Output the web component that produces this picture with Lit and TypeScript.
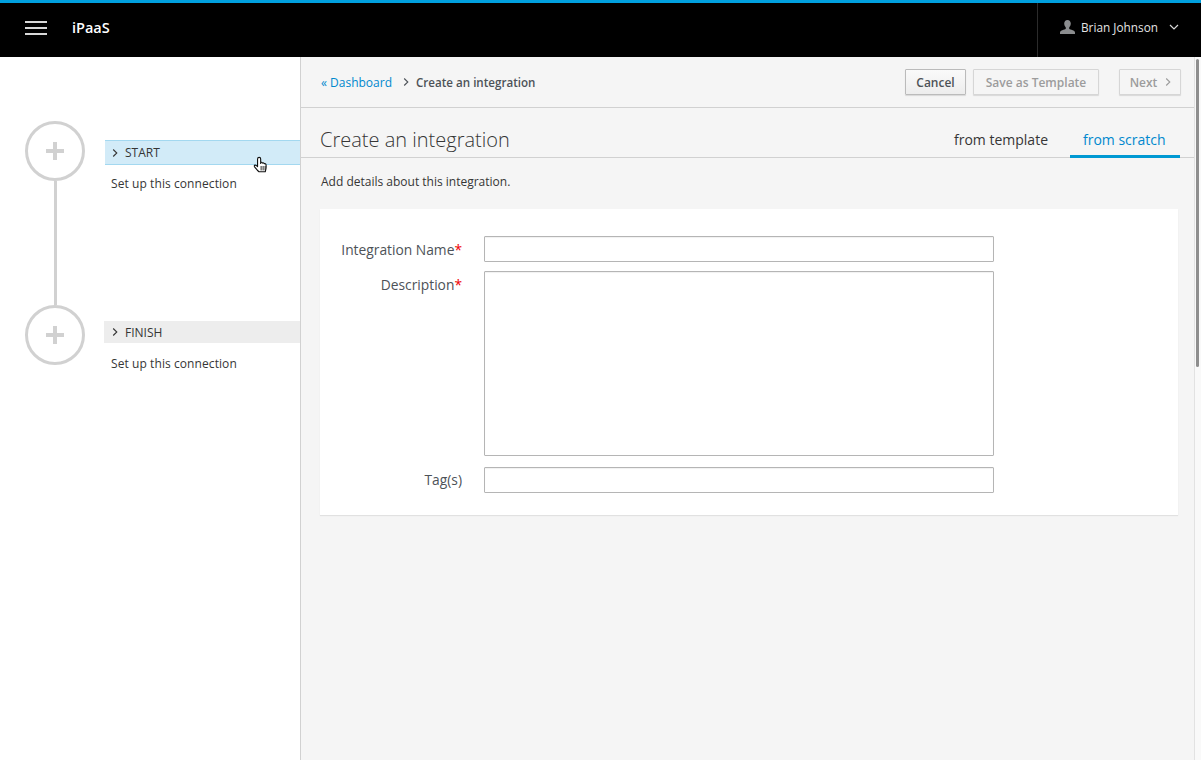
import { LitElement, html, css, svg } from 'lit';
import { customElement } from 'lit/decorators.js';

const chevron = (size: number, color: string) => html`
  <svg width=${size} height=${size} viewBox="0 0 10 10" fill="none" stroke=${color} stroke-width="1.1">
    <path d="M3.200 1.500 L6.800 5 L3.200 8.500"></path>
  </svg>
`;

const hand = svg`
  <path d="M5.500 1.200c.9 0 1.300.6 1.300 1.400v4.200l.3-1c.7-.3 1.300 0 1.400.6.700-.4 1.400-.1 1.500.6.700-.3 1.500 0 1.600.8.200 1.500.2 3-.2 4.400l-.5 2H5.300L3.800 12.800 1.300 9.700c-.5-.7-.2-1.400.5-1.500.7-.1 1.300.3 2.200 1.300V2.600c0-.8.600-1.400 1.500-1.400z" fill="#fff" stroke="#111" stroke-width="1" stroke-linejoin="round"></path>
  <path d="M7.200 9v4M9 9v4M10.800 9v4" stroke="#111" stroke-width=".8"></path>
`;

@customElement('app-root')
export class AppRoot extends LitElement {
  static styles = css`
    :host {
      display: block;
      height: 760px;
      overflow: hidden;
      font-family: 'Open Sans', 'Liberation Sans', sans-serif;
      font-size: 12px;
      color: #363636;
      background: #fff;
    }

    .topbar {
      display: flex;
      align-items: center;
      height: 54px;
      background: #000;
      border-top: 3px solid #00a0df;
      color: #fff;
    }

    .topbar__burger {
      display: flex;
      flex-direction: column;
      gap: 4px;
      width: 22px;
      margin: -4px 0 0 25px;
    }

    .topbar__burger span {
      height: 2px;
      background: #d8d8d8;
    }

    .topbar__brand {
      margin: -5px 0 0 25px;
      font-size: 14.500px;
      font-weight: 600;
    }

    .topbar__user {
      display: flex;
      align-items: center;
      align-self: stretch;
      margin-left: auto;
      width: 164px;
      box-sizing: border-box;
      padding: 0 0 7px 22px;
      border-left: 1px solid #2b2b2b;
      font-size: 11.800px;
      color: #e4e4e4;
    }

    .topbar__name {
      margin-left: 6px;
    }

    .topbar__caret {
      display: flex;
      margin-left: 10px;
    }

    .page {
      display: flex;
      height: 703px;
    }

    .side {
      flex: none;
      width: 300px;
      box-sizing: border-box;
      padding: 64px 0 0 25px;
    }

    .step {
      display: flex;
    }

    .step--first {
      height: 184px;
    }

    .rail {
      display: flex;
      flex-direction: column;
      align-items: center;
      flex: none;
      width: 60px;
    }

    .rail__circle {
      display: flex;
      align-items: center;
      justify-content: center;
      flex: none;
      box-sizing: border-box;
      width: 60px;
      height: 60px;
      border: 3px solid #d1d1d1;
      border-radius: 50%;
    }

    .rail__line {
      flex: 1;
      width: 3px;
      background: #d1d1d1;
    }

    .step__body {
      flex: 1;
      margin-left: 20px;
      padding-top: 19px;
    }

    .step__body--finish {
      margin-left: 19px;
      padding-top: 16px;
    }

    .step__head {
      display: flex;
      align-items: center;
      gap: 5px;
      height: 25px;
      box-sizing: border-box;
      padding-left: 5px;
      font-size: 12px;
      color: #363636;
    }

    .step__head--active {
      background: #d2ebf8;
      border-top: 1px solid #a3d8f0;
      border-bottom: 1px solid #a3d8f0;
    }

    .step__head--idle {
      height: 22px;
      padding-left: 6px;
      background: #ededed;
    }

    .step__note {
      margin: 10px 0 0 6px;
      font-size: 12px;
      line-height: 17px;
      letter-spacing: 0.08px;
      color: #363636;
    }

    .step__body--finish .step__note {
      margin: 12px 0 0 7px;
    }

    .cursor {
      position: absolute;
      left: 253px;
      top: 156px;
      width: 18px;
      height: 20px;
    }

    .main {
      flex: 1;
      position: relative;
      min-width: 0;
      background: #f5f5f5;
      border-left: 1px solid #d1d1d1;
    }

    .toolbar {
      display: flex;
      align-items: center;
      height: 51px;
      box-sizing: border-box;
      margin-right: 7px;
      padding: 0 13px 0 20px;
      border-bottom: 1px solid #d1d1d1;
    }

    .crumb {
      display: flex;
      align-items: center;
      font-size: 12px;
    }

    .crumb__link {
      color: #0088ce;
    }

    .crumb__sep {
      display: flex;
      margin: 0 5px 0 9px;
    }

    .crumb__current {
      font-size: 11.600px;
      font-weight: 600;
      color: #4d5258;
    }

    .actions {
      display: flex;
      margin-left: auto;
    }

    .btn {
      display: flex;
      align-items: center;
      justify-content: center;
      box-sizing: border-box;
      height: 26px;
      padding: 0;
      font: 600 12px 'Open Sans', 'Liberation Sans', sans-serif;
      border: 1px solid #bbb;
      border-radius: 1px;
      background: linear-gradient(#fafafa, #ededed);
      color: #4d5258;
      box-shadow: 0 1px 1px rgba(0, 0, 0, 0.12);
    }

    .btn--off {
      color: #9c9c9c;
      border-color: #d6d6d6;
      background: #f5f5f5;
    }

    .btn--cancel {
      width: 61px;
    }

    .btn--save {
      width: 126px;
      margin-left: 7px;
    }

    .btn--next {
      gap: 6px;
      width: 62px;
      margin-left: 20px;
      padding-left: 3px;
    }

    .heading {
      display: flex;
      align-items: flex-end;
      height: 50px;
      box-sizing: border-box;
      margin-right: 7px;
      padding-right: 14px;
      border-bottom: 1px solid #d1d1d1;
    }

    .heading__title {
      margin: 0 0 3px 19px;
      font-size: 20px;
      font-weight: 300;
      line-height: 28px;
      color: #363636;
    }

    .tabs {
      display: flex;
      margin-left: auto;
    }

    .tab {
      box-sizing: border-box;
      height: 34px;
      margin-bottom: -1px;
      padding: 6px 13px 0;
      font-size: 14px;
      line-height: 20px;
      color: #363636;
    }

    .tab--active {
      width: 110px;
      margin-left: 9px;
      color: #0088ce;
      border-bottom: 3px solid #0099d3;
    }

    .intro {
      margin: 16px 0 0 20px;
      font-size: 12px;
      line-height: 16px;
      color: #363636;
    }

    .card {
      display: grid;
      grid-template-columns: 142px 510px;
      column-gap: 22px;
      row-gap: 9px;
      box-sizing: border-box;
      width: 858px;
      height: 306px;
      margin: 19px 0 0 19px;
      padding: 27px 0 0 0;
      align-content: start;
      background: #fff;
      box-shadow: 0 1px 1px rgba(0, 0, 0, 0.08);
    }

    .card__label {
      box-sizing: border-box;
      height: 26px;
      padding-top: 1px;
      font-size: 13.800px;
      line-height: 26px;
      text-align: right;
      color: #4d5258;
    }

    .card__label--tags {
      margin-top: 1px;
    }

    .card__label em {
      font-style: normal;
      color: #e00;
    }

    .field {
      display: block;
      box-sizing: border-box;
      width: 510px;
      height: 26px;
      border: 1px solid #b5b5b5;
      border-radius: 1px;
      background: #fff;
      box-shadow: inset 0 1px 1px rgba(0, 0, 0, 0.06);
    }

    .field--area {
      height: 185px;
      resize: none;
    }

    .field--tags {
      margin-top: 2px;
    }

    .scrollbar {
      position: absolute;
      top: 0;
      right: 0;
      bottom: 0;
      width: 7px;
      box-sizing: border-box;
      padding: 2px 2px 0 1px;
      background: #f9f9f9;
      border-left: 1px solid #e2e2e2;
    }

    .scrollbar__thumb {
      height: 308px;
      border-radius: 2px;
      background: #8e8e8e;
    }
  `;

  render() {
    return html`
      <header class="topbar">
        <div class="topbar__burger"><span></span><span></span><span></span></div>
        <div class="topbar__brand">iPaaS</div>
        <div class="topbar__user">
          <svg width="15" height="14" viewBox="0 0 15 14" fill="#8b8d8f">
            <path d="M7.500 0c2 0 3.300 1.500 3.300 3.600 0 1.500-.7 3-1.600 3.800v1c0 .6 1 .9 2.300 1.400 1.700.6 3.500 1.200 3.500 2.700V14H0v-1.500c0-1.500 1.800-2.100 3.500-2.700 1.300-.5 2.300-.8 2.300-1.400v-1C4.900 6.600 4.200 5.100 4.200 3.600 4.200 1.500 5.500 0 7.500 0z"></path>
          </svg>
          <span class="topbar__name">Brian Johnson</span>
          <span class="topbar__caret">
            <svg width="12" height="12" viewBox="0 0 12 12" fill="none" stroke="#d8d8d8" stroke-width="1.200">
              <path d="M2 4l4 4 4-4"></path>
            </svg>
          </span>
        </div>
      </header>

      <div class="page">
        <aside class="side">
          ${this.renderStep('START', true)}
          ${this.renderStep('FINISH', false)}
        </aside>

        <main class="main">
          <div class="toolbar">
            <div class="crumb">
              <span class="crumb__link">« Dashboard</span>
              <span class="crumb__sep">${chevron(10, '#4d5258')}</span>
              <span class="crumb__current">Create an integration</span>
            </div>
            <div class="actions">
              <button class="btn btn--cancel">Cancel</button>
              <button class="btn btn--off btn--save">Save as Template</button>
              <button class="btn btn--off btn--next">Next ${chevron(10, '#9c9c9c')}</button>
            </div>
          </div>

          <div class="heading">
            <h1 class="heading__title">Create an integration</h1>
            <div class="tabs">
              <div class="tab">from template</div>
              <div class="tab tab--active">from scratch</div>
            </div>
          </div>

          <p class="intro">Add details about this integration.</p>

          <form class="card">
            <label class="card__label">Integration Name<em>*</em></label>
            <input class="field" />
            <label class="card__label">Description<em>*</em></label>
            <textarea class="field field--area"></textarea>
            <label class="card__label card__label--tags">Tag(s)</label>
            <input class="field field--tags" />
          </form>

          <div class="scrollbar"><div class="scrollbar__thumb"></div></div>
        </main>
      </div>

      <svg class="cursor" viewBox="0 0 16 18">${hand}</svg>
    `;
  }

  renderStep(name: string, first: boolean) {
    return html`
      <section class="step ${first ? 'step--first' : ''}">
        <div class="rail">
          <div class="rail__circle">
            <svg width="20" height="20" viewBox="0 0 20 20" fill="#d1d1d1">
              <path d="M8 1h4v7h7v4h-7v7H8v-7H1V8h7z"></path>
            </svg>
          </div>
          ${first ? html`<div class="rail__line"></div>` : ''}
        </div>
        <div class="step__body ${first ? '' : 'step__body--finish'}">
          <div class="step__head ${first ? 'step__head--active' : 'step__head--idle'}">
            ${chevron(10, '#363636')}<span>${name}</span>
          </div>
          <p class="step__note">Set up this connection</p>
        </div>
      </section>
    `;
  }
}
